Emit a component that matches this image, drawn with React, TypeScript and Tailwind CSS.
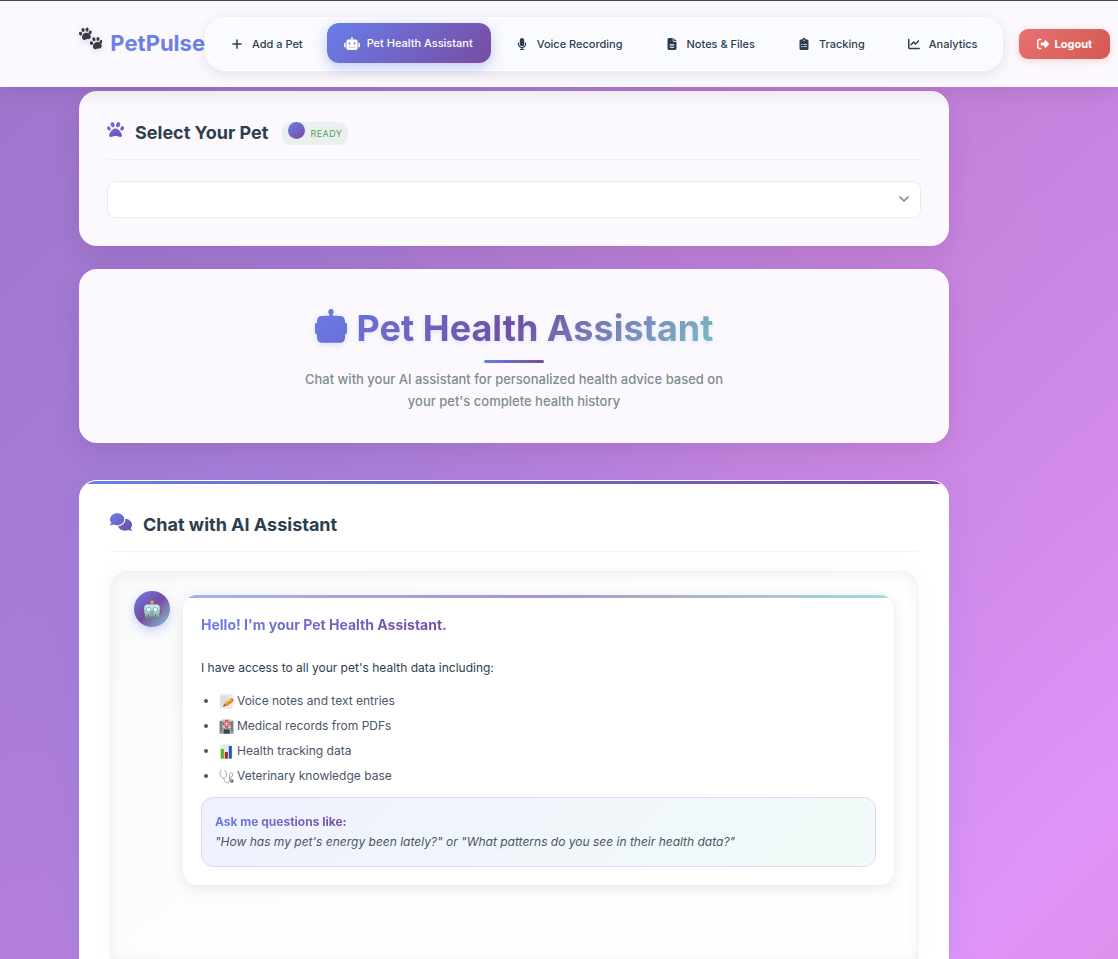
import type { ReactNode } from "react";
import {
  FaPlus,
  FaRobot,
  FaMicrophone,
  FaFileLines,
  FaClipboardList,
  FaChartLine,
  FaRightFromBracket,
  FaPaw,
  FaComments,
} from "react-icons/fa6";

const NAV = [
  { label: "Add a Pet", icon: FaPlus, size: "size-3" },
  { label: "Pet Health Assistant", icon: FaRobot, size: "h-[13px] w-4", active: true },
  { label: "Voice Recording", icon: FaMicrophone, size: "size-3" },
  { label: "Notes & Files", icon: FaFileLines, size: "size-3" },
  { label: "Tracking", icon: FaClipboardList, size: "size-3" },
  { label: "Analytics", icon: FaChartLine, size: "size-3" },
];

function PawPrints() {
  return (
    <svg viewBox="0 0 75 69" className="-mt-2.5 h-[23px] w-[25px] drop-shadow-[0_2px_3px_rgba(102,126,234,0.3)]" aria-hidden="true">
      <g fill="#3c3c3c">
        <g id="paw">
          <path d="M10 28c1-7 6-11 12-12 7-1 13 2 15 8 2 6 0 10-4 12-4 1-6 0-9 1s-5 3-8 2c-5-1-7-6-6-11z" />
          <ellipse cx="5" cy="19" rx="5" ry="6" transform="rotate(-25 5 19)" />
          <ellipse cx="13" cy="7" rx="5" ry="6.5" transform="rotate(-12 13 7)" />
          <ellipse cx="26" cy="6" rx="5" ry="6.5" transform="rotate(8 26 6)" />
          <ellipse cx="36" cy="15" rx="5" ry="6" transform="rotate(25 36 15)" />
        </g>
        <use href="#paw" x="35" y="30" />
      </g>
    </svg>
  );
}

function RobotFace() {
  return (
    <svg viewBox="0 0 54 58" className="h-[19px] w-[18px]" role="img" aria-label="Robot">
      <defs>
        <linearGradient id="metal" x1="0" y1="0" x2="0" y2="1">
          <stop offset="0" stopColor="#d3eeee" />
          <stop offset="0.6" stopColor="#9cc8cb" />
          <stop offset="1" stopColor="#527f87" />
        </linearGradient>
      </defs>
      <rect x="25" y="8" width="4" height="8" fill="#7d8f98" />
      <circle cx="27" cy="6" r="5.5" fill="#e2a528" />
      <rect x="0" y="31" width="8" height="13" rx="3" fill="#b9393f" />
      <rect x="46" y="31" width="8" height="13" rx="3" fill="#b9393f" />
      <path d="M12 14h30c5 0 9 5 9 12l-2 21c-1 7-4 11-9 11H14c-5 0-8-4-9-11L3 26c0-7 4-12 9-12z" fill="url(#metal)" />
      <circle cx="17" cy="29" r="8" fill="#74c2cf" />
      <circle cx="37" cy="29" r="8" fill="#74c2cf" />
      <circle cx="17" cy="29" r="5" fill="#ecffff" />
      <circle cx="37" cy="29" r="5" fill="#ecffff" />
      <path d="M27 32l4 6h-8z" fill="#e34b42" />
      <rect x="15" y="42" width="24" height="11" rx="5" fill="#4e5a62" />
      <path d="M19 43h3v8h-3zM25.500 43h3v8h-3zM32 43h3v8h-3z" fill="#e9f5f5" />
    </svg>
  );
}

function MemoIcon() {
  return (
    <svg viewBox="0 0 42 45" className="size-full" role="img" aria-label="Memo">
      <rect x="2" y="2" width="36" height="41" fill="#e9e9ea" stroke="#d0d0d3" />
      <path d="M6 9h20M6 15h24M6 21h18M6 27h12M6 33h10" stroke="#b4b6bc" strokeWidth="2" strokeDasharray="5 2" />
      <path d="M11 38l4-12 20-13 7 9-20 14z" fill="#f0b92f" />
      <path d="M17 31l22-13 3 4-20 14z" fill="#d48f1d" />
      <path d="M34 14l4-3 5 8-3 3z" fill="#db6969" />
      <path d="M11 38l3-8 5 5z" fill="#6b5434" />
    </svg>
  );
}

function HospitalIcon() {
  return (
    <svg viewBox="0 0 42 45" className="size-full" role="img" aria-label="Hospital">
      <rect x="0" y="5" width="42" height="39" fill="#8c9299" />
      <path d="M2 11h6M2 17h6M2 23h6M2 29h6M2 35h6M34 11h6M34 17h6M34 23h6M34 29h6M34 35h6" stroke="#596574" strokeWidth="3" />
      <rect x="9" y="1" width="25" height="43" fill="#c3c4c6" />
      <path d="M17 3h9v7h7v9h-7v7h-9v-7h-7v-9h7z" fill="#dc4646" />
      <path d="M21.500 7v15M14 14.500h15" stroke="#f5dada" strokeWidth="3" />
      <rect x="12" y="31" width="19" height="13" fill="#31475a" />
      <path d="M9 29h25" stroke="#777c83" strokeWidth="2" />
    </svg>
  );
}

function BarsIcon() {
  return (
    <svg viewBox="0 0 42 45" className="size-full" role="img" aria-label="Bar chart">
      <rect x="2" y="1" width="37" height="43" fill="#e6edf3" />
      <path d="M2 11h37M2 21h37M2 31h37M14 1v43M27 1v43" stroke="#cbd8e3" />
      <rect x="4" y="15" width="9" height="29" fill="#4fb51f" />
      <rect x="16" y="24" width="9" height="20" fill="#b51d2b" />
      <rect x="28" y="6" width="9" height="38" fill="#2357b9" />
    </svg>
  );
}

function StethoscopeIcon() {
  return (
    <svg viewBox="0 0 42 45" className="size-full" role="img" aria-label="Stethoscope">
      <g fill="none" strokeLinecap="round">
        <path d="M5 3C-3 15 4 26 13 28c9-4 12-14 3-25" stroke="#a6a8ac" strokeWidth="3" />
        <path d="M13 28c2 11 8 16 14 13 9-5 1-15 3-24 2-7 9-8 10-1 1 7-10 9-9 17l6 2" stroke="#9a9ca0" strokeWidth="3" />
        <path d="M13 28c2 11 8 16 14 13" stroke="#d2d3d5" strokeWidth="1" />
      </g>
      <circle cx="37" cy="36" r="5" fill="#55585c" />
      <circle cx="36" cy="35" r="2" fill="#c8cacc" />
    </svg>
  );
}

const SOURCES = [
  { icon: MemoIcon, label: "Voice notes and text entries" },
  { icon: HospitalIcon, label: "Medical records from PDFs" },
  { icon: BarsIcon, label: "Health tracking data" },
  { icon: StethoscopeIcon, label: "Veterinary knowledge base" },
];

function Header() {
  return (
    <header className="sticky top-0 z-10 flex h-[87px] items-center border-t border-[#45424a] bg-[#fbf9fd] pl-[79px] pr-1.5 shadow-[0_4px_22px_rgba(0,0,0,0.1)]">
      <a href="#" className="flex w-[126px] shrink-0 items-center gap-2 pb-0.5 text-[22px] font-bold text-[#6d80e8]">
        <PawPrints />
        PetPulse
      </a>
      <nav className="flex shrink-0 items-center gap-1.5 rounded-[20px] border border-white bg-[#fafbfe] p-1.5 shadow-[0_3px_14px_rgba(0,0,0,0.1)]">
        {NAV.map(({ label, icon: Icon, size, active }) => (
          <a
            key={label}
            href="#"
            className={
              active
                ? "flex h-10 -translate-y-px items-center gap-2 rounded-xl bg-linear-135 from-[#667eea] to-[#764ba2] px-[18px] text-[11px] font-medium text-white shadow-[0_4px_14px_rgba(102,126,234,0.4)]"
                : "flex h-10 items-center gap-2 rounded-xl px-[18px] text-[11px] font-medium text-[#2c3e50]"
            }
          >
            <span className="flex w-3.5 justify-center">
              <Icon className={`${size} shrink-0`} />
            </span>
            {label}
          </a>
        ))}
      </nav>
      <button className="ml-4 flex h-[30px] shrink-0 items-center gap-1.5 rounded-[9px] bg-linear-135 from-[#e87070] to-[#d35a52] px-[18px] text-[11px] font-bold text-white shadow-[0_2px_8px_rgba(231,76,60,0.2)]">
        <FaRightFromBracket className="size-3" />
        Logout
      </button>
    </header>
  );
}

function GradientText({ children }: { children: ReactNode }) {
  return (
    <strong className="bg-linear-135 from-[#667eea] to-[#764ba2] bg-clip-text font-bold text-transparent">
      {children}
    </strong>
  );
}

function PetSelector() {
  return (
    <section className="rounded-[18px] bg-[#fbf9fd] px-7 pt-7 pb-7 shadow-[0_7px_28px_rgba(0,0,0,0.1)]">
      <div className="flex h-[41px] items-start border-b border-[#f0eff5]">
        <FaPaw className="mt-0.5 size-[17px]" fill="url(#brand)" />
        <h2 className="ml-[11px] text-lg leading-[27px] font-bold text-[#2c3e50]">Select Your Pet</h2>
        <span className="mt-[3px] ml-3.5 flex h-[23px] items-center gap-[5px] rounded-[9px] bg-[#eaf0ee] px-1.5 text-[9px] tracking-wider text-[#53a35b]">
          <span className="mb-1.5 size-[17px] rounded-full bg-linear-135 from-[#667eea] to-[#764ba2]" />
          READY
        </span>
      </div>
      <div className="relative mt-[21px]">
        <select
          aria-label="Select your pet"
          className="block h-[37px] w-full appearance-none rounded-[9px] border border-[#e8ebf2] bg-white px-3 text-xs"
        />
        <svg
          viewBox="0 0 10 6"
          className="pointer-events-none absolute top-[15px] right-3 h-1.5 w-2.5"
          fill="none"
          stroke="#858585"
          strokeWidth="1.7"
          strokeLinecap="round"
          strokeLinejoin="round"
          aria-hidden="true"
        >
          <path d="M1 1l4 4 4-4" />
        </svg>
      </div>
    </section>
  );
}

function Hero() {
  return (
    <section className="mt-[23px] flex flex-col items-center rounded-[18px] bg-[#fbf9fd] px-7 pt-[31px] pb-[31px] text-center shadow-[0_7px_28px_rgba(0,0,0,0.1)]">
      <div className="flex gap-2.5">
        <svg viewBox="0 0 96 102" className="mt-[9px] h-[34px] w-8 drop-shadow-[0_2px_3px_rgba(102,126,234,0.2)]" aria-hidden="true">
          <path
            fill="url(#brandSoft)"
            d="M48 0a9 9 0 0 1 5 16v4c10 0 18 0 25 1 8 1 11 7 12 15l1 6c4 0 5 2 5 6v20c0 4-1 6-5 7l-1 11c-1 11-7 15-17 15H23C13 101 7 97 6 86L5 75c-4-1-5-3-5-7V48c0-4 1-6 5-6l1-6c1-8 4-14 12-15 7-1 15-1 25-1v-4A9 9 0 0 1 48 0z"
          />
        </svg>
        <h1 className="bg-linear-135 from-[#6a74dc] via-[#7050a6] via-45% to-[#78c0c4] bg-clip-text text-4xl leading-[56px] font-bold text-transparent drop-shadow-[0_2px_2px_rgba(102,126,234,0.15)]">
          Pet Health Assistant
        </h1>
      </div>
      <div className="mt-1 h-[3px] w-[60px] rounded-full bg-linear-90 from-[#667eea] to-[#764ba2]" />
      <p className="mt-[5px] max-w-[440px] text-[13px] leading-[22px] font-medium text-[#7f8c8d]">
        Chat with your AI assistant for personalized health advice based on your pet's complete health history
      </p>
    </section>
  );
}

function Chat() {
  return (
    <section className="relative mt-[37px] flex flex-1 flex-col overflow-hidden rounded-t-[18px] border border-b-0 border-white bg-white shadow-[0_7px_28px_rgba(102,126,234,0.2)]">
      <div className="h-[3px] shrink-0 bg-linear-90 from-[#667eea] to-[#764ba2]" />
      <div className="flex flex-1 flex-col px-[30px] pt-[27px]">
        <div className="flex h-[41px] items-start border-b border-[#f2f3f5]">
          <FaComments className="mt-px h-[20px] w-[22px]" fill="url(#brand)" />
          <h2 className="ml-[11px] text-lg leading-[27px] font-bold text-[#2c3e50]">Chat with AI Assistant</h2>
        </div>
        <div className="mt-[19px] flex flex-1 items-start gap-[13px] rounded-t-[18px] border border-b-0 border-[#eff0f6] bg-linear-145 from-[#f9fafc] to-[#fdfefe] to-60% px-[23px] pt-[19px] pb-[73px] shadow-[inset_0_2px_14px_rgba(0,0,0,0.05),0_0_18px_rgba(102,126,234,0.06)]">
          <div className="flex size-9 shrink-0 items-center justify-center rounded-full bg-linear-135 from-[#667eea] via-[#764ba2] to-[#7fcdcd] shadow-[0_4px_10px_rgba(102,126,234,0.3)]">
            <RobotFace />
          </div>
          <div className="mt-1 flex-1 overflow-hidden rounded-[14px] bg-white text-xs text-[#2c3e50] shadow-[0_3px_14px_rgba(0,0,0,0.09)]">
            <div className="h-[3px] bg-linear-90 from-[#667eea] via-[#764ba2] to-[#5fc6b8] opacity-60" />
            <div className="px-[18px] pt-4 pb-[18px]">
              <p className="text-sm leading-[22px]">
                <GradientText>Hello! I'm your Pet Health Assistant.</GradientText>
              </p>
              <p className="mt-[22px] leading-5">I have access to all your pet's health data including:</p>
              <ul className="mt-2.5 list-disc pl-[18px] leading-[25px] text-[#4a5568]">
                {SOURCES.map(({ icon: Icon, label }) => (
                  <li key={label}>
                    <span className="mr-[3px] inline-block h-[15px] w-[15px] align-middle leading-none">
                      <Icon />
                    </span>
                    {label}
                  </li>
                ))}
              </ul>
              <div className="mt-[9px] rounded-xl border border-[#d5dcf6] bg-linear-135 from-[#eff1fd] to-[#f2fbf9] px-[13px] py-3.5 leading-5 text-[#4a5568]">
                <p>
                  <GradientText>Ask me questions like:</GradientText>
                </p>
                <p className="italic">
                  "How has my pet's energy been lately?" or "What patterns do you see in their health data?"
                </p>
              </div>
            </div>
          </div>
        </div>
      </div>
    </section>
  );
}

export default function App() {
  return (
    <div className="flex min-h-screen flex-col bg-[radial-gradient(circle_at_20%_60%,rgba(140,125,220,0.3),transparent_50%),radial-gradient(circle_at_80%_20%,rgba(225,130,215,0.3),transparent_50%),linear-gradient(135deg,#9c74cb_0%,#b880dc_50%,#df94f8_92%,#df90ee_100%)] font-['Inter',sans-serif]">
      <svg className="absolute size-0" aria-hidden="true">
        <defs>
          <linearGradient id="brand" x1="0" y1="0" x2="1" y2="1">
            <stop offset="0" stopColor="#667eea" />
            <stop offset="1" stopColor="#764ba2" />
          </linearGradient>
          <linearGradient id="brandSoft" x1="0" y1="0" x2="1" y2="1">
            <stop offset="0" stopColor="#6a7ce6" />
            <stop offset="1" stopColor="#6a6fd4" />
          </linearGradient>
        </defs>
      </svg>
      <Header />
      <main className="mr-[169px] ml-[79px] flex flex-1 flex-col pt-1">
        <PetSelector />
        <Hero />
        <Chat />
      </main>
    </div>
  );
}
